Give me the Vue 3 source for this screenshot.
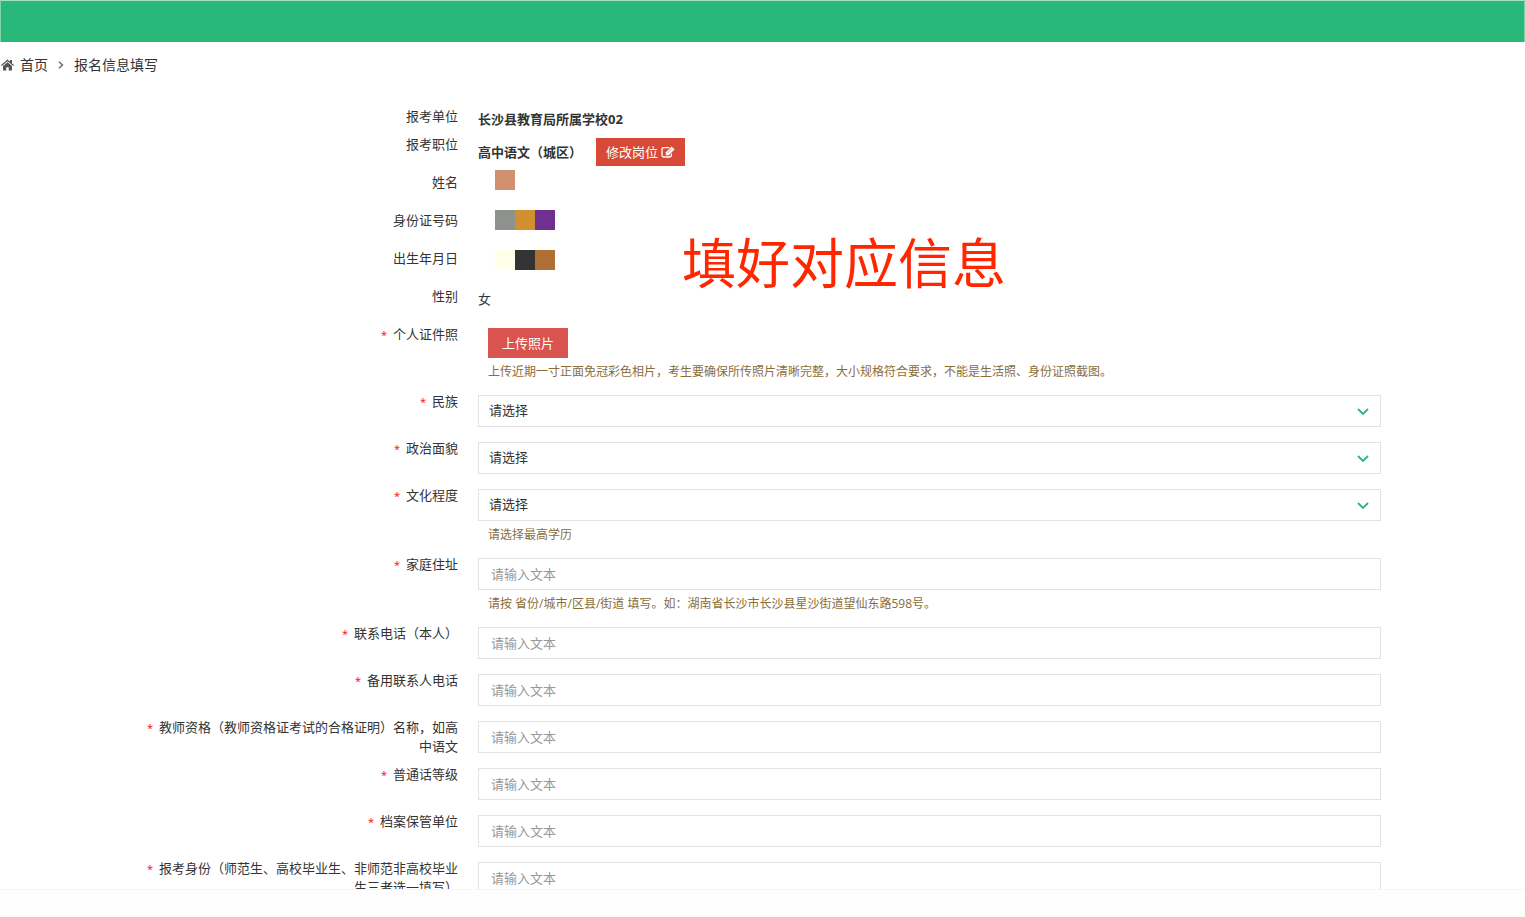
<script setup>
import { reactive } from 'vue'

const statics = [
  { label: '报考单位', value: '长沙县教育局所属学校02', bold: true, tight: true },
  { label: '报考职位', value: '高中语文（城区）', bold: true, action: '修改岗位' },
  { label: '姓名' },
  { label: '身份证号码' },
  { label: '出生年月日' },
  { label: '性别', value: '女' },
]

const masks = [
  ['tan'],
  ['grey', 'amber', 'violet'],
  ['ivory', 'coal', 'rust'],
]

const fields = [
  { id: 'nation', type: 'select', label: '民族' },
  { id: 'politics', type: 'select', label: '政治面貌' },
  { id: 'education', type: 'select', label: '文化程度', help: '请选择最高学历' },
  {
    id: 'address',
    type: 'text',
    label: '家庭住址',
    help: '请按 省份/城市/区县/街道 填写。如：湖南省长沙市长沙县星沙街道望仙东路598号。',
  },
  { id: 'phone', type: 'text', label: '联系电话（本人）' },
  { id: 'backup', type: 'text', label: '备用联系人电话' },
  { id: 'teacher', type: 'text', label: '教师资格（教师资格证考试的合格证明）名称，如高中语文' },
  { id: 'mandarin', type: 'text', label: '普通话等级' },
  { id: 'archive', type: 'text', label: '档案保管单位' },
  { id: 'identity', type: 'text', label: '报考身份（师范生、高校毕业生、非师范非高校毕业生三者选一填写）' },
]

const form = reactive(Object.fromEntries(fields.map((f) => [f.id, ''])))
</script>

<template>
  <div class="page">
    <header class="topbar"></header>
    <main class="content">
      <nav class="crumbs">
        <svg class="home" viewBox="0 0 13 12" aria-hidden="true">
          <path d="M6.5 0.6 L9 2.7 V1 H11 V4.4 L13 6.1 L12.3 7 L6.5 2.2 L0.7 7 L0 6.1 Z" />
          <path d="M6.5 3.2 L11 6.9 V11.5 H7.7 V8.3 H5.3 V11.5 H2 V6.9 Z" />
        </svg>
        <a href="#">首页</a>
        <svg class="angle" viewBox="0 0 6 8" aria-hidden="true">
          <path d="M1 0.7 L4.5 4 L1 7.3" />
        </svg>
        <span>报名信息填写</span>
      </nav>

      <form class="form" @submit.prevent>
        <div v-for="s in statics" :key="s.label" class="row static" :class="{ tight: s.tight }">
          <span class="label">{{ s.label }}</span>
          <div class="field value" :class="{ bold: s.bold, action: s.action }">
            <span>{{ s.value }}</span>
            <button v-if="s.action" type="button" class="edit">
              {{ s.action }}
              <svg viewBox="0 0 14 12" aria-hidden="true">
                <path class="line" d="M8.2 1.6 H2.8 Q1 1.6 1 3.4 V9.2 Q1 11 2.8 11 H8.6 Q10.4 11 10.4 9.2 V7.6" />
                <path class="fill" d="M4.6 6.2 L10.6 0.2 L13.8 3.4 L7.8 9.4 H4.6 Z" />
                <path class="cut" d="M6.6 6.8 L10.6 2.8" />
              </svg>
            </button>
          </div>
        </div>

        <div class="row">
          <label class="label" for="photo"><i>*</i>个人证件照</label>
          <div class="field">
            <button id="photo" type="button" class="upload">上传照片</button>
            <p class="help">上传近期一寸正面免冠彩色相片，考生要确保所传照片清晰完整，大小规格符合要求，不能是生活照、身份证照截图。</p>
          </div>
        </div>

        <div v-for="f in fields" :key="f.id" class="row">
          <label class="label" :for="f.id"><i>*</i>{{ f.label }}</label>
          <div class="field">
            <div v-if="f.type === 'select'" class="select">
              <select :id="f.id" v-model="form[f.id]">
                <option value="">请选择</option>
              </select>
              <svg viewBox="0 0 12 8" aria-hidden="true"><path d="M1 1 L6 6 L11 1" /></svg>
            </div>
            <input v-else :id="f.id" v-model="form[f.id]" type="text" placeholder="请输入文本" />
            <p v-if="f.help" class="help">{{ f.help }}</p>
          </div>
        </div>

        <div class="masks" aria-hidden="true">
          <div v-for="(line, n) in masks" :key="n" class="mask">
            <b v-for="c in line" :key="c" :class="c"></b>
          </div>
        </div>
        <div class="note">填好对应信息</div>
      </form>
    </main>
    <footer class="footer"></footer>
  </div>
</template>

<style>
body {
  margin: 0;
  background: #fff;
}
</style>

<style scoped>
* {
  box-sizing: border-box;
}
.page {
  display: flex;
  flex-direction: column;
  height: 100vh;
  color: #333;
  font-family: "Open Sans", "Noto Sans CJK SC", sans-serif;
  font-size: 13px;
  line-height: 18px;
  text-spacing-trim: space-all;
}
.topbar {
  flex: none;
  height: 42px;
  background: #29b87a;
  border: 1px solid #7dd3ae;
  border-top-color: #a5e0c7;
  border-bottom: 0;
}
.content {
  flex: 1;
  min-height: 0;
  overflow: hidden;
}
.footer {
  flex: none;
  height: 28px;
  border-top: 1px solid #f6f6f6;
  background: #fefefe;
}
.crumbs {
  display: flex;
  align-items: center;
  height: 46px;
  padding-left: 1px;
  font-size: 14px;
}
.crumbs a {
  color: inherit;
  text-decoration: none;
}
.home {
  width: 13px;
  height: 12px;
  margin-right: 6px;
  fill: #555;
}
.angle {
  width: 6px;
  height: 8px;
  margin: 0 10px;
  fill: none;
  stroke: #666;
  stroke-width: 1.4;
}
.form {
  position: relative;
  padding: 19px 144px 0 145px;
}
.row {
  display: grid;
  grid-template-columns: 313px minmax(0, 1fr);
  column-gap: 20px;
  align-items: start;
  margin-bottom: 12px;
}
.static {
  height: 26px;
}
.tight {
  height: 16px;
}
.label {
  margin-bottom: -4px;
  text-align: right;
}
.label i {
  margin-right: 6px;
  color: #f00;
  font-size: 11px;
  font-style: normal;
}
.field {
  padding-top: 3px;
}
.value {
  display: flex;
  align-items: center;
  gap: 14px;
}
.bold {
  font-weight: 700;
}
button {
  border: 0;
  color: #fff;
  font: inherit;
  font-weight: 400;
  cursor: pointer;
}
.edit {
  display: flex;
  align-items: center;
  gap: 3px;
  height: 28px;
  padding: 0 10px;
  background: #d84a38;
}
.edit svg {
  width: 14px;
  height: 12px;
}
.line {
  fill: none;
  stroke: #fff;
  stroke-width: 1.3;
}
.fill {
  fill: #fff;
  stroke: #d84a38;
  stroke-width: 0.5;
}
.cut {
  fill: none;
  stroke: #d84a38;
  stroke-width: 0.7;
}
.upload {
  display: block;
  height: 30px;
  margin-left: 10px;
  padding: 0 14px;
  background: #d9534f;
}
.help {
  margin: 5px 0 0 10px;
  color: #8a6d3b;
  font-size: 12px;
  line-height: 17px;
}
input,
select {
  display: block;
  width: 100%;
  height: 32px;
  border: 1px solid #e2e2e2;
  border-radius: 0;
  background: #fff;
  color: #333;
  font: inherit;
  outline: 0;
}
input {
  padding: 0 12px;
}
input::placeholder {
  color: #999;
  opacity: 1;
}
select {
  padding: 0 30px 2px 10px;
  appearance: none;
}
.select {
  position: relative;
}
.select svg {
  position: absolute;
  top: 13px;
  right: 12px;
  width: 12px;
  height: 8px;
  fill: none;
  stroke: #29b87a;
  stroke-width: 1.8;
  pointer-events: none;
}
.masks {
  position: absolute;
  top: 82px;
  left: 495px;
  display: grid;
  gap: 20px;
}
.mask {
  display: flex;
}
.mask b {
  width: 20px;
  height: 20px;
}
.tan { background: #d09070; }
.grey { background: #8f918f; }
.amber { background: #d09030; }
.violet { background: #6f308f; }
.ivory { background: #ffffea; }
.coal { background: #333; }
.rust { background: #af6e34; }
.note {
  position: absolute;
  top: 133px;
  left: 682px;
  color: #ff2600;
  font-family: "Noto Sans CJK SC", sans-serif;
  font-size: 54px;
  line-height: 80px;
  white-space: nowrap;
}
</style>
